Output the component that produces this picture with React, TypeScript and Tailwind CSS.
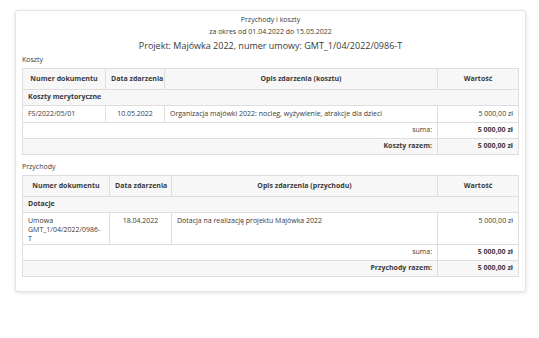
import React from 'react';

type Row = { doc: string; date: string; desc: string; value: string };

interface SectionProps {
  label: string;
  descHeader: string;
  category: string;
  rows: Row[];
  totalLabel: string;
  cols: string[];
  tall?: boolean;
}

const Section: React.FC<SectionProps> = ({ label, descHeader, category, rows, totalLabel, cols, tall }) => (
  <div>
    <div className="h-[12px] leading-[12px]">{label}</div>
    <table className="mt-[2px] w-full table-fixed border-collapse border border-[#dedede] text-[#3a3a3a]">
      <colgroup>
        {cols.map((w, i) => (
          <col key={i} style={{ width: w }} />
        ))}
      </colgroup>
      <thead>
        <tr className="h-[21px] bg-[#f7f7f7]">
          <th className="whitespace-nowrap border border-[#dedede] px-[5px] font-bold">Numer dokumentu</th>
          <th className="whitespace-nowrap border border-[#dedede] px-[5px] font-bold">Data zdarzenia</th>
          <th className="whitespace-nowrap border border-[#dedede] px-[5px] font-bold">{descHeader}</th>
          <th className="whitespace-nowrap border border-[#dedede] px-[5px] font-bold">Wartość</th>
        </tr>
      </thead>
      <tbody>
        <tr className="h-[16px] bg-[#f7f7f7]">
          <td colSpan={4} className="border border-[#dedede] px-[5px] font-bold">{category}</td>
        </tr>
        {rows.map((r) => (
          <tr key={r.doc} className={tall ? 'h-[32px] align-top' : 'h-[17px]'}>
            <td className={`border border-[#dedede] px-[5px] ${tall ? 'pt-[3px] leading-[9px]' : ''}`}>{r.doc}</td>
            <td className={`border border-[#dedede] px-[5px] text-center ${tall ? 'pt-[3px] leading-[9px]' : ''}`}>{r.date}</td>
            <td className={`border border-[#dedede] px-[5px] ${tall ? 'pt-[3px] leading-[9px]' : ''}`}>{r.desc}</td>
            <td className={`border border-[#dedede] px-[5px] text-right ${tall ? 'pt-[3px] leading-[9px]' : ''}`}>{r.value}</td>
          </tr>
        ))}
        <tr className="h-[16px]">
          <td colSpan={3} className="border border-[#dedede] px-[5px] text-right">suma:</td>
          <td className="border border-[#dedede] px-[5px] text-right font-bold">5 000,00 zł</td>
        </tr>
        <tr className="h-[16px] bg-[#f7f7f7]">
          <td colSpan={3} className="border border-[#dedede] px-[5px] text-right font-bold">{totalLabel}</td>
          <td className="border border-[#dedede] px-[5px] text-right font-bold">5 000,00 zł</td>
        </tr>
      </tbody>
    </table>
  </div>
);

export default function App() {
  return (
    <div
      className="h-[338px] w-[539px] bg-white pl-[15px] pt-[10px] text-[7px] text-[#3a3a3a]"
      style={{ fontFamily: '"Open Sans", "DejaVu Sans", sans-serif' }}
    >
      <div className="h-[282px] w-[511px] rounded-[3px] border border-[#e4e4e4] bg-white px-[6px] pt-[3px] shadow-[0_1px_4px_rgba(0,0,0,0.12)]">
        <div className="text-center">
          <div className="h-[12px] leading-[12px]">Przychody i koszty</div>
          <div className="h-[12px] leading-[12px]">za okres od 01.04.2022 do 15.05.2022</div>
          <div className="mt-[1px] h-[14px] text-[9px] leading-[14px]">
            Projekt: Majówka 2022, numer umowy: GMT_1/04/2022/0986-T
          </div>
        </div>
        <div className="mt-[1px]">
          <Section
            label="Koszty"
            descHeader="Opis zdarzenia (kosztu)"
            category="Koszty merytoryczne"
            cols={['83px', '59px', '273px', '81px']}
            rows={[
              {
                doc: 'FS/2022/05/01',
                date: '10.05.2022',
                desc: 'Organizacja majówki 2022: nocleg, wyżywienie, atrakcje dla dzieci',
                value: '5 000,00 zł',
              },
            ]}
            totalLabel="Koszty razem:"
          />
        </div>
        <div className="mt-[6px]">
          <Section
            label="Przychody"
            descHeader="Opis zdarzenia (przychodu)"
            category="Dotacje"
            cols={['87px', '62px', '266px', '81px']}
            tall
            rows={[
              {
                doc: 'Umowa GMT_1/04/2022/0986-T',
                date: '18.04.2022',
                desc: 'Dotacja na realizację projektu Majówka 2022',
                value: '5 000,00 zł',
              },
            ]}
            totalLabel="Przychody razem:"
          />
        </div>
      </div>
    </div>
  );
}
